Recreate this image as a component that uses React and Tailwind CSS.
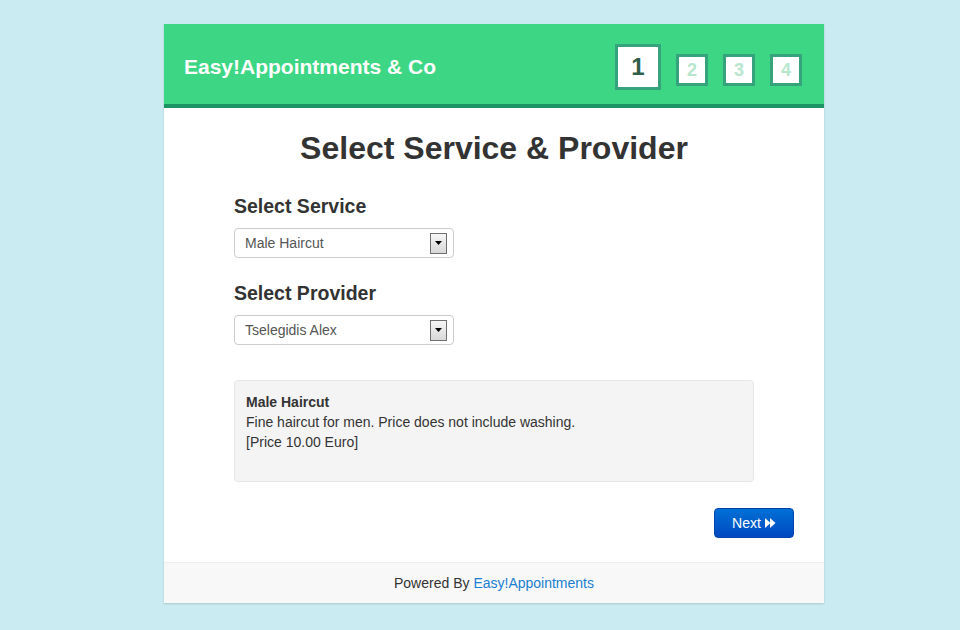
import React from "react";

function FakeSelect({ value }) {
  return (
    <div className="w-[220px] h-[30px] border border-[#cccccc] rounded-[4px] bg-white flex items-center justify-between pl-[10px] pr-[6px]">
      <span className="text-[14px] text-[#555555] leading-[20px]">{value}</span>
      <div className="w-[17px] h-[21px] border border-[#6f6f6f] bg-gradient-to-b from-[#f6f6f6] to-[#d8d8d8] flex items-center justify-center">
        <svg width="7" height="4" viewBox="0 0 7 4">
          <polygon points="0,0 7,0 3.5,4" fill="#000" />
        </svg>
      </div>
    </div>
  );
}

function Step({ n }) {
  return (
    <div className="w-[32px] h-[32px] mt-[10px] border-[3px] border-[#35a37b] bg-white flex items-center justify-center text-[18px] font-bold text-[#b7e6cd]">
      {n}
    </div>
  );
}

export default function App() {
  return (
    <div
      className="min-h-[630px] w-full bg-[#c9ebf1] pt-[24px]"
      style={{ fontFamily: '"Liberation Sans", Arial, sans-serif' }}
    >
      <div className="ml-[164px] w-[660px] bg-white shadow-[0_1px_2px_rgba(0,0,0,0.15)]">
        <div className="h-[84px] bg-[#3dd684] border-b-4 border-[#1d9463] flex items-start justify-between pl-[20px] pr-[22px] pt-[20px]">
          <div className="text-white font-bold text-[21px] leading-[46px]">Easy!Appointments &amp; Co</div>
          <div className="flex items-start gap-[15px]">
            <div className="w-[46px] h-[46px] border-[3px] border-[#35a37b] bg-white flex items-center justify-center text-[24px] font-bold text-[#2f5e4a]">1</div>
            <Step n="2" />
            <Step n="3" />
            <Step n="4" />
          </div>
        </div>

        <div className="px-[70px] pt-[20px] text-[#333333]">
          <h2 className="text-center text-[32px] font-bold leading-[40px]">Select Service &amp; Provider</h2>

          <h3 className="mt-[26px] text-[19.5px] font-bold leading-[24px]">Select Service</h3>
          <div className="mt-[10px]">
            <FakeSelect value="Male Haircut" />
          </div>

          <h3 className="mt-[23px] text-[19.5px] font-bold leading-[24px]">Select Provider</h3>
          <div className="mt-[10px]">
            <FakeSelect value="Tselegidis Alex" />
          </div>

          <div className="mt-[35px] w-[520px] h-[102px] bg-[#f4f4f4] border border-[#e6e6e6] rounded-[4px] px-[11px] pt-[11px] text-[14px] leading-[20px]">
            <div className="font-bold">Male Haircut</div>
            <div>Fine haircut for men. Price does not include washing.</div>
            <div>[Price 10.00 Euro]</div>
          </div>

          <div className="flex justify-end mt-[26px] mr-[-40px] pb-[24px]">
            <div className="w-[80px] h-[30px] rounded-[4px] border border-[#0044aa] bg-gradient-to-b from-[#0070d6] to-[#0048c0] flex items-center justify-center gap-[4px] text-white text-[14px]">
              <span>Next</span>
              <svg width="11" height="10" viewBox="0 0 11 10">
                <polygon points="0,0 5.5,5 0,10" fill="#fff" />
                <polygon points="5,0 10.5,5 5,10" fill="#fff" />
              </svg>
            </div>
          </div>
        </div>

        <div className="h-[41px] bg-[#f8f8f8] border-t border-[#eeeeee] flex items-center justify-center text-[14px] text-[#333333]">
          <span>Powered By&nbsp;</span>
          <span className="text-[#1a7fd0]">Easy!Appointments</span>
        </div>
      </div>
    </div>
  );
}
